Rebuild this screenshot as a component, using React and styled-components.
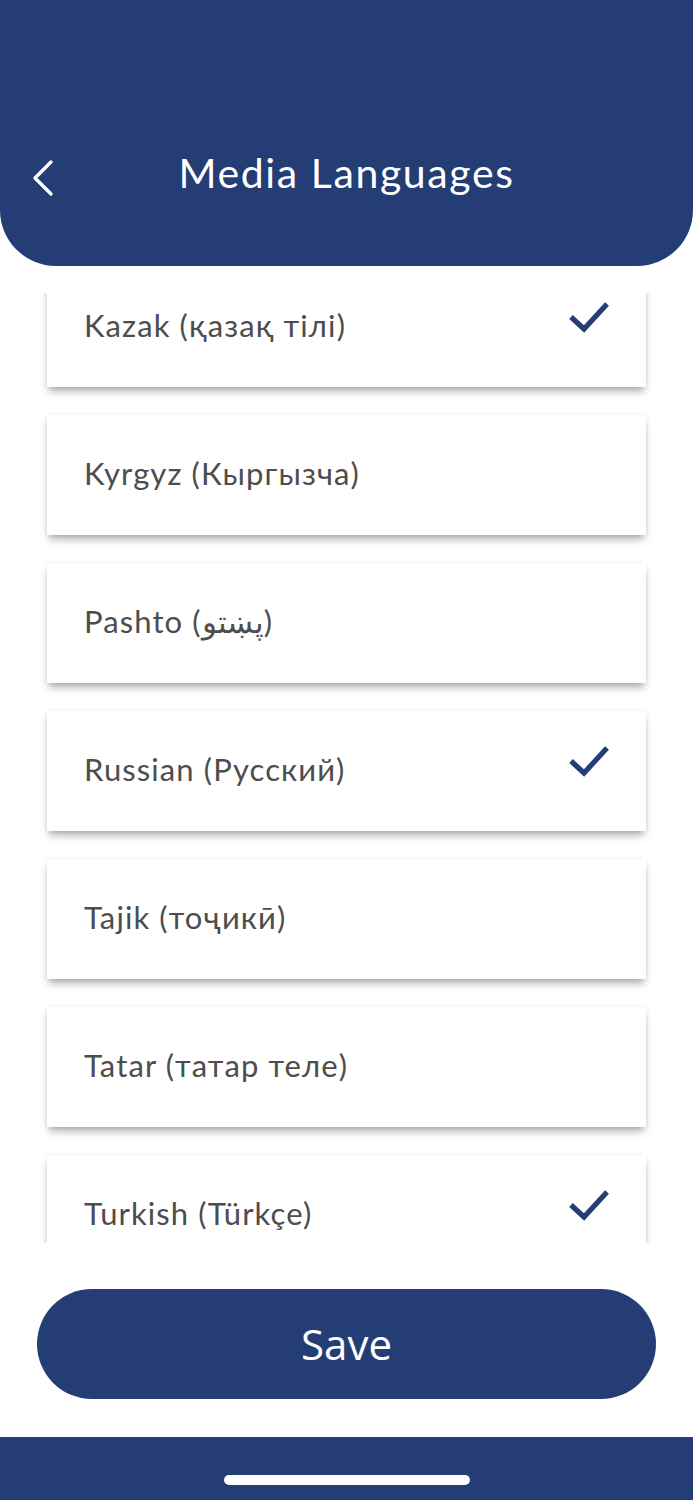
import React, { useEffect, useRef } from "react";
import styled, { createGlobalStyle } from "styled-components";

const NAVY = "#243d75";

const Global = createGlobalStyle`
  html, body { margin: 0; padding: 0; background: #fff; }
  body { font-family: "Lato", "Noto Sans", sans-serif; }
  * { box-sizing: border-box; }
`;

const Screen = styled.div`
  width: 693px;
  height: 1500px;
  display: flex;
  flex-direction: column;
  background: #fff;
  overflow: hidden;
`;

const Header = styled.header`
  height: 266px;
  flex-shrink: 0;
  background: ${NAVY};
  border-radius: 0 0 56px 56px;
  display: flex;
  align-items: flex-start;
  padding-top: 146px;
  position: relative;
`;

const BackButton = styled.button`
  position: absolute;
  left: 24px;
  top: 156px;
  width: 36px;
  height: 44px;
  border: none;
  background: transparent;
  padding: 0;
  display: flex;
  align-items: center;
  justify-content: center;
`;

const Title = styled.h1`
  flex: 1;
  margin: 0;
  text-align: center;
  color: #fff;
  font-family: "Lato", "Noto Sans", sans-serif;
  font-weight: 400;
  font-size: 41px;
  line-height: 54px;
  letter-spacing: 1.6px;
`;

const ListViewport = styled.div`
  margin-top: 27px;
  height: 950px;
  flex-shrink: 0;
  overflow: hidden;
`;

const List = styled.ul`
  list-style: none;
  margin: 0;
  padding: 0 47px 20px;
  display: flex;
  flex-direction: column;
  gap: 28px;
`;

const Card = styled.li`
  height: 120px;
  background: #fff;
  display: flex;
  align-items: center;
  justify-content: space-between;
  padding: 0 34px 4px 37px;
  box-shadow: 0 6px 8px -2px rgba(0, 0, 0, 0.33), 0 0 5px rgba(0, 0, 0, 0.08);
`;

const Label = styled.span`
  font-family: "Lato", "Noto Sans", sans-serif;
  font-size: 31px;
  color: #4d4d4d;
  letter-spacing: 1.1px;
`;

const Check = styled.svg`
  width: 44px;
  height: 40px;
  margin-top: -16px;
`;

const Footer = styled.div`
  padding: 46px 37px 0 37px;
  height: 194px;
  flex-shrink: 0;
`;

const SaveButton = styled.button`
  display: block;
  width: 100%;
  height: 110px;
  border: none;
  border-radius: 55px;
  background: ${NAVY};
  color: #fff;
  font-family: "Open Sans", "Noto Sans", sans-serif;
  font-size: 42px;
  line-height: 50px;
  font-weight: 500;
  padding: 0;
`;

const HomeBar = styled.div`
  flex: 1;
  background: ${NAVY};
  display: flex;
  justify-content: center;
  padding-top: 38px;
`;

const Indicator = styled.div`
  width: 246px;
  height: 10px;
  border-radius: 5px;
  background: #fff;
`;

const languages = [
  { name: "Kazak (қазақ тілі)", checked: true },
  { name: "Kyrgyz (Кыргызча)", checked: false },
  { name: "Pashto (پښتو)", checked: false },
  { name: "Russian (Русский)", checked: true },
  { name: "Tajik (тоҷикӣ)", checked: false },
  { name: "Tatar (татар теле)", checked: false },
  { name: "Turkish (Türkçe)", checked: true },
];

function CheckIcon() {
  return (
    <Check viewBox="0 0 44 40">
      <path d="M3 20 L16 32 L39 7" fill="none" stroke={NAVY} strokeWidth="5.2" strokeLinecap="butt" strokeLinejoin="miter" />
    </Check>
  );
}

export default function App() {
  const ref = useRef(null);
  useEffect(() => {
    if (ref.current) ref.current.scrollTop = 26;
  }, []);
  return (
    <Screen>
      <Global />
      <Header>
        <BackButton aria-label="Back">
          <svg width="30" height="40" viewBox="0 0 30 40">
            <path d="M24 4 L8 20 L24 36" fill="none" stroke="#fff" strokeWidth="3.4" strokeLinecap="round" strokeLinejoin="round" />
          </svg>
        </BackButton>
        <Title>Media Languages</Title>
      </Header>
      <ListViewport ref={ref}>
        <List>
          {languages.map((l) => (
            <Card key={l.name}>
              <Label>{l.name}</Label>
              {l.checked && <CheckIcon />}
            </Card>
          ))}
        </List>
      </ListViewport>
      <Footer>
        <SaveButton>Save</SaveButton>
      </Footer>
      <HomeBar>
        <Indicator />
      </HomeBar>
    </Screen>
  );
}
